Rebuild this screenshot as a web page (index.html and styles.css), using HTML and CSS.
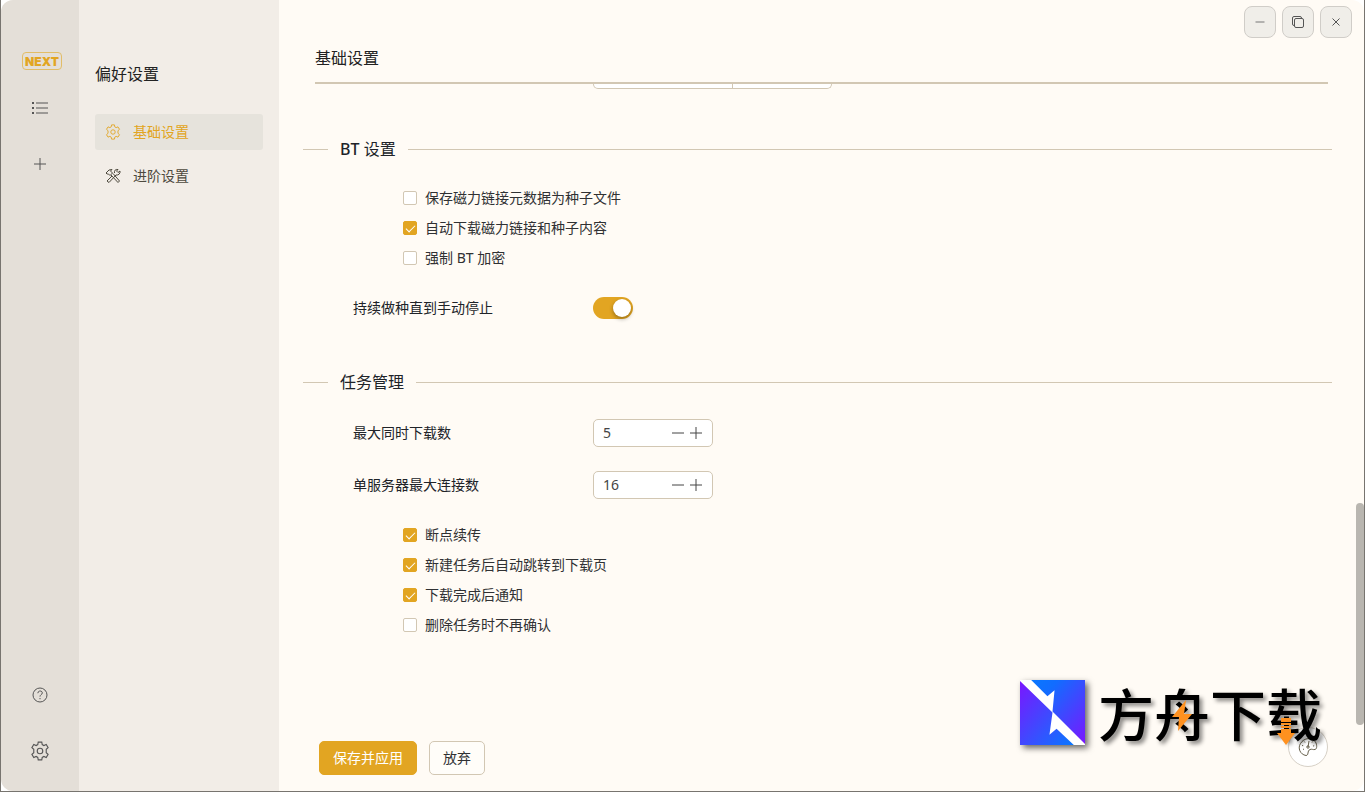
FILE: index.html
```html
<!DOCTYPE html>
<html lang="zh-CN">
<head>
<meta charset="utf-8">
<title>偏好设置</title>
<link rel="stylesheet" href="styles.css">
</head>
<body>
<svg class="defs" aria-hidden="true">
  <symbol id="gear" viewBox="0 0 18 18"><path d="M7 3.200 7.400 1h3.200l.4 2.200 1.500.9 2.100-.9 1.700 2.800-1.700 1.500v3l1.700 1.500-1.700 2.800-2.100-.9-1.500.9-.4 2.200H7.400L7 14.800l-1.500-.9-2.100.9L1.700 12l1.700-1.500v-3L1.700 6l1.700-2.800 2.100.9z"/><circle cx="9" cy="9" r="2.500"/></symbol>
  <symbol id="minus" viewBox="0 0 12 12"><path d="M0 6h12"/></symbol>
  <symbol id="plus" viewBox="0 0 12 12"><path d="M0 6h12M6 0v12"/></symbol>
</svg>
<div class="frame">
<div class="app">
  <nav class="rail" aria-label="主导航">
    <span class="next">NEXT</span>
    <a class="rail-link" href="#tasks" aria-label="任务列表"><svg width="18" height="18" viewBox="0 0 18 18"><path d="M5 4h12M5 9h12M5 14h12"/><path class="dots" d="M1 3h2v2H1zM1 8h2v2H1zM1 13h2v2H1z"/></svg></a>
    <a class="rail-link" href="#add" aria-label="新建任务"><svg width="12" height="12"><use href="#plus"/></svg></a>
    <span class="spacer"></span>
    <a class="rail-link" href="#help" aria-label="帮助"><svg width="18" height="18" viewBox="0 0 18 18"><circle cx="9" cy="9" r="7"/><path d="M6.800 7.200c.2-3 4.700-2.800 4.500-.2C11.200 8.600 9 8.700 9 10.600M9 12v1.200"/></svg></a>
    <a class="rail-link" href="#settings" aria-label="设置"><svg width="20" height="20"><use href="#gear"/></svg></a>
  </nav>
  <aside class="side">
    <h1 class="side-title">偏好设置</h1>
    <a class="side-link active" href="#basic"><svg width="16" height="16"><use href="#gear"/></svg>基础设置</a>
    <a class="side-link" href="#advanced"><svg width="16" height="16" viewBox="0 0 16 16"><path d="m1 5 3-3 3-.5L5.500 3l2 2-2.500 2.500-1.500-1.500L2 6zM6 7l7 7.500 1.500-1.500L8 5.500M9.500 5c-.5-2.500 1-4 3.500-3.500L11.500 3l1.500 1.500L15 3c.5 2.500-1.500 4.500-4 4L4 14.500 2 13l5-5"/></svg>进阶设置</a>
  </aside>
  <main class="main">
    <div class="window-tools">
      <button class="win" aria-label="最小化"><svg class="faint" width="10" height="10" viewBox="0 0 10 10"><path d="M.5 5h9"/></svg></button>
      <button class="win" aria-label="还原"><svg width="14" height="14" viewBox="0 0 14 14"><rect x="3.500" y="3.500" width="9" height="9" rx="1.500"/><path d="M3.500 10.500H3A1.500 1.500 0 0 1 1.500 9V3A1.500 1.500 0 0 1 3 1.500h6A1.500 1.500 0 0 1 10.500 3v.5"/></svg></button>
      <button class="win" aria-label="关闭"><svg width="8" height="8" viewBox="0 0 8 8"><path d="m.5.500 7 7m0-7-7 7"/></svg></button>
    </div>
    <h2 class="title">基础设置</h2>
    <form class="form">
      <div class="cut-field"><span></span><span></span></div>
      <fieldset class="section">
        <legend class="divider"><span><b>BT</b> 设置</span></legend>
        <div class="checks">
          <label class="check"><input type="checkbox">保存磁力链接元数据为种子文件</label>
          <label class="check"><input type="checkbox" checked>自动下载磁力链接和种子内容</label>
          <label class="check"><input type="checkbox">强制 BT 加密</label>
        </div>
        <div class="row"><label for="seed">持续做种直到手动停止</label><input class="switch" id="seed" type="checkbox" role="switch" checked></div>
      </fieldset>
      <fieldset class="section">
        <legend class="divider"><span>任务管理</span></legend>
        <div class="row"><label for="max">最大同时下载数</label><div class="stepper"><input id="max" type="text" inputmode="numeric" value="5"><button type="button" aria-label="减少"><svg width="12" height="12"><use href="#minus"/></svg></button><button type="button" aria-label="增加"><svg width="12" height="12"><use href="#plus"/></svg></button></div></div>
        <div class="row"><label for="conn">单服务器最大连接数</label><div class="stepper"><input id="conn" type="text" inputmode="numeric" value="16"><button type="button" aria-label="减少"><svg width="12" height="12"><use href="#minus"/></svg></button><button type="button" aria-label="增加"><svg width="12" height="12"><use href="#plus"/></svg></button></div></div>
        <div class="checks">
          <label class="check"><input type="checkbox" checked>断点续传</label>
          <label class="check"><input type="checkbox" checked>新建任务后自动跳转到下载页</label>
          <label class="check"><input type="checkbox" checked>下载完成后通知</label>
          <label class="check"><input type="checkbox">删除任务时不再确认</label>
        </div>
      </fieldset>
    </form>
    <footer class="actions"><button class="btn primary">保存并应用</button><button class="btn">放弃</button></footer>
    <div class="scroll-thumb"></div>
    <button class="palette" aria-label="主题"><svg width="20" height="20" viewBox="0 0 20 20"><path d="M8 18.500C2 17.500-.5 11 2.500 6.500 6 .500 14 0 17.500 5c1.500 2.500 1.800 7-.5 7.500-2 .5-3-.8-5 0-3 1.200-1 6-4 6zM10 10l1-6"/><circle cx="10" cy="10" r="1.200"/><path d="M6.300 4.500 7 5.500M14 5.500l.7-1M4 8.500l1.200.2M15 9l1.200-.2M5 12.500l1-.5"/></svg></button>
    <div class="brand">
      <svg class="brand-mark" width="65" height="65" viewBox="0 0 64 64"><defs><linearGradient id="g1" x1="0" y1="0" x2="1" y2="1"><stop offset="0" stop-color="#0878ff"/><stop offset=".25" stop-color="#126cff"/><stop offset="1" stop-color="#7b16ff"/></linearGradient><linearGradient id="g2" x1="0" y1="0" x2="1" y2="1"><stop stop-color="#7b16ff"/><stop offset="1" stop-color="#0878ff"/></linearGradient></defs><path fill="#fff" d="M0 0h64v64H0z"/><path fill="url(#g1)" d="M11 0h53v63L32 31l2-21-7 6z"/><path fill="url(#g2)" d="M0 1l32 31-3 22 7-6 17 16H0z"/></svg>
      <span class="brand-text">方舟下载</span>
      <svg class="bolt" width="20" height="31" viewBox="0 0 20 31"><path d="M14 0 0 17h7L6 31l14-17h-8z"/></svg>
      <svg class="arrow" width="18" height="27" viewBox="0 0 18 27"><path d="M4 0h10v4H4zM4 5h10v2H4zM4 8h10v2H4zM4 11h10v4h4L9 27 0 15h4z"/></svg>
    </div>
  </main>
</div>
</div>
</body>
</html>
```
FILE: styles.css
```css
* { box-sizing: border-box; }
body { margin: 0; background: #fff; color: #303133; font: 14px/20px "Noto Sans", "Noto Sans CJK SC", sans-serif; }
button, input { font: inherit; color: inherit; }
button { padding: 0; cursor: pointer; }
svg { display: block; fill: none; stroke: currentColor; stroke-width: 1; }
.defs { position: absolute; width: 0; height: 0; }
h1, h2 { margin: 0; font-size: 16px; line-height: 24px; font-weight: 400; color: #222; }
.frame { height: 100vh; border: 1px solid #77746f; border-top: 0; background: #fff; }
.app { display: flex; height: 100%; overflow: hidden; border-radius: 12px; background: #fffbf5; }
.rail { width: 78px; flex: none; background: #e4dfd8; color: #555; display: flex; flex-direction: column; align-items: center; padding: 52px 0 22px; }
.next { height: 18px; width: 40px; text-align: center; margin-left: 4px; border: 1px solid #e2bd67; border-radius: 4px; color: #e2a522; font: 900 12px/17px Inter, sans-serif; }
.rail-link { display: grid; place-items: center; width: 40px; height: 40px; margin: 18px 0 -2px; color: #555; }
.dots { fill: currentColor; stroke: none; }
.spacer { flex: 1; }
.side { width: 200px; flex: none; background: #f2ede7; padding: 62px 16px; display: flex; flex-direction: column; gap: 8px; }
.side-title { margin-bottom: 20px; }
.side-link { display: flex; align-items: center; gap: 12px; height: 36px; padding: 0 10px; border-radius: 3px; color: #4d493d; text-decoration: none; }
.side-link.active { background: #e6e3dc; color: #e2a522; }
.main { position: relative; flex: 1; min-width: 0; display: flex; flex-direction: column; padding: 46px 32px 16px 24px; }
.window-tools { position: absolute; top: 6px; right: 12px; display: flex; gap: 6px; }
.win { width: 32px; height: 32px; border: 1px solid #d0cdc8; border-radius: 8px; background: #f0eee9; display: grid; place-items: center; color: #555; }
.faint { color: #777; }
.title { height: 38px; margin: 0 4px 0 12px; border-bottom: 2px solid #d2c7b3; }
.form { flex: 1; min-height: 0; overflow: hidden; }
.cut-field { display: flex; width: 239px; height: 5px; margin-left: 290px; border: 1px solid #d2c7b3; border-top: 0; border-radius: 0 0 6px 6px; background: #fff; }
.cut-field span { flex: 99; }
.cut-field span:first-child { flex: 139; border-right: 1px solid #d2c7b3; }
.section { border: 0; margin: 48px 0 0; padding: 0; min-width: 0; }
.divider { width: 100%; padding: 0; display: flex; align-items: center; gap: 12px; font-size: 16px; line-height: 25px; color: #202328; }
.divider b { font-weight: 500; }
.divider::before, .divider::after { content: ""; height: 1px; background: #d2c7b3; width: 25px; }
.divider::after { flex: 1; width: auto; }
.checks { display: flex; flex-direction: column; align-items: flex-start; gap: 10px; margin: 26px 0 26px 100px; }
.check { display: flex; align-items: center; gap: 8px; }
.check input { appearance: none; width: 14px; height: 14px; margin: 0; border: 1px solid #d2c7b3; border-radius: 2px; background: #fff; display: grid; place-items: center; }
.check input:checked { background: #e2a522; border-color: #e2a522; }
.check input:checked::after { content: ""; width: 8px; height: 4px; border: solid #fff; border-width: 0 0 1px 1px; transform: translateY(-1px) rotate(-45deg); }
.row { display: flex; align-items: center; min-height: 28px; margin: 24px 0 0 50px; color: #202328; }
.row > label { width: 240px; flex: none; }
.switch { appearance: none; width: 40px; height: 22px; margin: 0; padding: 2px; border-radius: 11px; background: #e2a522; display: flex; justify-content: flex-end; }
.switch::after { content: ""; width: 18px; height: 18px; border-radius: 50%; background: #fff; box-shadow: 0 2px 4px #0005; }
.stepper { display: flex; align-items: center; gap: 6px; width: 120px; height: 28px; padding: 0 10px 0 9px; border: 1px solid #d2c7b3; border-radius: 5px; background: #fff; }
.stepper input { flex: 1; min-width: 0; padding: 0; border: 0; background: none; outline: 0; color: #444; }
.stepper button { border: 0; background: none; color: #444; }
.actions { display: flex; gap: 12px; margin-left: 16px; }
.btn { height: 34px; padding: 0 13px; border: 1px solid #d2c7b3; border-radius: 5px; background: #fffdf9; }
.primary { background: #e2a522; border-color: #e2a522; color: #fff; }
.scroll-thumb { position: absolute; right: 0; top: 503px; width: 8px; height: 222px; border-radius: 4px; background: #b9b6b0; }
.palette { position: absolute; right: 36px; bottom: 24px; width: 40px; height: 40px; border: 1px solid #d6d0c6; border-radius: 50%; background: #fff; display: grid; place-items: center; color: #655f4b; }
.brand { position: absolute; right: 42px; bottom: 46px; display: flex; align-items: flex-end; gap: 13px; color: #000; pointer-events: none; }
.brand svg { stroke: none; }
.brand-mark { filter: drop-shadow(3px 3px 3px #0009); }
.brand-text { font: 500 56px/66px "Noto Sans CJK SC", sans-serif; text-shadow: 3px 3px 4px #0007; }
.brand .bolt, .brand .arrow { position: absolute; fill: #ff911f; }
.bolt { left: 152px; bottom: 14px; }
.arrow { left: 257px; bottom: 0; }
```
